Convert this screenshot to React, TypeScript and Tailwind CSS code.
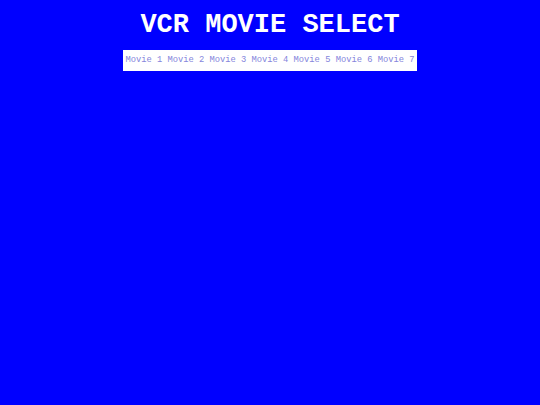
export default function App() {
  const movies = ["Movie 1", "Movie 2", "Movie 3", "Movie 4", "Movie 5", "Movie 6", "Movie 7"]

  return (
    <div className="min-h-screen w-full bg-[#0000ff] flex flex-col items-center font-['Liberation_Mono',monospace]">
      <h1 className="mt-[10px] text-[27px] leading-[30px] font-bold text-white">VCR MOVIE SELECT</h1>
      <div className="mt-[10px] h-[21px] bg-white px-[3px] pt-[1px] flex items-center text-[8.75px] text-[#8484dc] whitespace-pre">
        {movies.join(" ")}
      </div>
    </div>
  )
}
